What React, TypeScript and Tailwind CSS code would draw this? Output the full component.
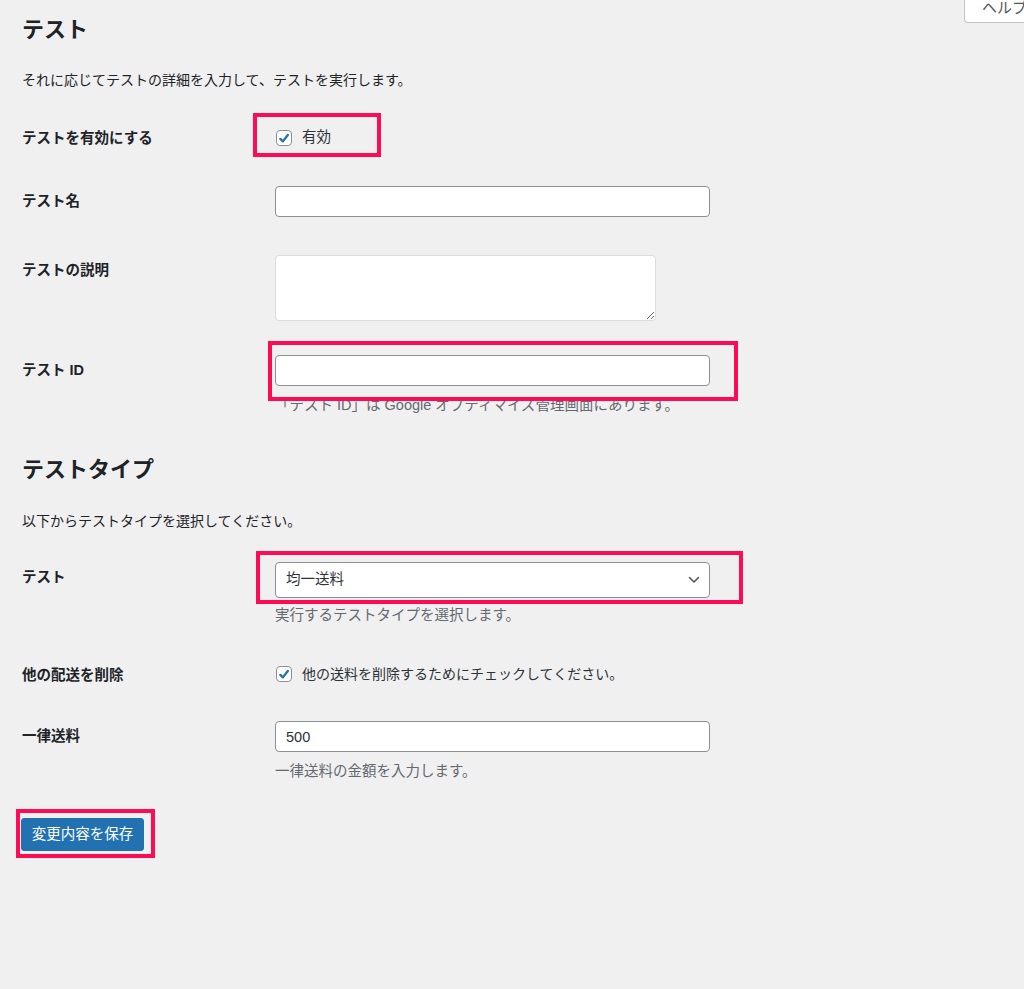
import type { ReactNode } from "react";

const FONT = "font-['Liberation_Sans','Noto_Sans_CJK_JP',sans-serif]";

function Checkbox() {
  return (
    <span className="inline-flex h-[16px] w-[16px] shrink-0 items-center justify-center rounded-[4px] border border-[#8c8f94] bg-white">
      <svg viewBox="0 0 16 16" className="h-[15px] w-[15px]" aria-hidden>
        <path d="M3.8 8.4 L6.7 11.3 L12.4 4" fill="none" stroke="#2271b1" strokeWidth="2.6" strokeLinecap="round" strokeLinejoin="round" />
      </svg>
    </span>
  );
}

function Row({ label, children, fieldClass = "py-[19px]" }: { label: string; children: ReactNode; fieldClass?: string }) {
  return (
    <div className="flex">
      <div className="w-[253px] shrink-0 pt-[25px] text-[14.5px] font-bold leading-[18px] text-[#1d2327]">{label}</div>
      <div className={fieldClass}>{children}</div>
    </div>
  );
}

function Help({ children, className = "mt-[10px]" }: { children: ReactNode; className?: string }) {
  return <p className={`${className} text-[14.5px] leading-[18px] text-[#646970]`}>{children}</p>;
}

const inputCls =
  "block h-[31px] w-[435px] rounded-[4px] border border-[#8c8f94] bg-white px-[10px] text-[14.5px] text-[#2c3338] outline-none";

// red annotation frames drawn over the screenshot
const marks = [
  { id: "enable", cls: "left-[253px] top-[113px] h-[44px] w-[128px]" },
  { id: "testid", cls: "left-[268px] top-[341px] h-[60px] w-[470px]" },
  { id: "type", cls: "left-[256px] top-[551px] h-[53px] w-[487px]" },
  { id: "save", cls: "left-[16px] top-[809px] h-[49px] w-[139px]" },
];

export default function App() {
  return (
    <div className={`relative min-h-screen overflow-hidden bg-[#f0f0f1] pl-[22px] pt-[16px] text-[#1d2327] ${FONT}`}>
      {/* ヘルプ tab */}
      <div className="absolute left-[964px] top-0 h-[23px] w-[110px] rounded-bl-[4px] border-b border-l border-[#c3c4c7] bg-white pl-[17px] text-[15px] leading-[15px] text-[#50575e]">
        ヘルプ
      </div>

      <h2 className="text-[22px] font-bold leading-[28px]">テスト</h2>
      <p className="mt-[27px] text-[14px] leading-[18px]">それに応じてテストの詳細を入力して、テストを実行します。</p>

      <div className="mt-[15px]">
        <Row label="テストを有効にする" fieldClass="pb-[21px] pt-[24px]">
          <label className="flex h-[18px] items-center gap-[10px] pl-[1px] pt-[2px] text-[14.5px] text-[#2c3338]">
            <Checkbox />
            有効
          </label>
        </Row>
        <Row label="テスト名">
          <input className={inputCls} readOnly defaultValue="" />
        </Row>
        <Row label="テストの説明" fieldClass="pb-[15px] pt-[19px]">
          <textarea
            className="block h-[66px] w-[381px] rounded-[4px] border border-[#dcdcde] bg-white outline-none"
            readOnly
            defaultValue=""
          />
        </Row>
        <Row label="テスト ID">
          <input className={inputCls} readOnly defaultValue="" />
          <Help>「テスト ID」は Google オプティマイズ管理画面にあります。</Help>
        </Row>
      </div>

      <h2 className="mt-[23px] text-[22px] font-bold leading-[28px]">テストタイプ</h2>
      <p className="mt-[28px] text-[14px] leading-[18px]">以下からテストタイプを選択してください。</p>

      <div className="mt-[13px]">
        <Row label="テスト" fieldClass="pb-[17px] pt-[19px]">
          <div className="flex h-[36px] w-[435px] items-center justify-between rounded-[4px] border border-[#8c8f94] bg-white pl-[10px] pr-[9px] text-[14.5px] text-[#2c3338]">
            <span>均一送料</span>
            <svg viewBox="0 0 12 8" className="h-[8px] w-[12px]" aria-hidden>
              <path d="M1.5 1.5 L6 6 L10.5 1.5" fill="none" stroke="#50575e" strokeWidth="1.6" strokeLinecap="round" strokeLinejoin="round" />
            </svg>
          </div>
          <Help className="mt-[8px]">実行するテストタイプを選択します。</Help>
        </Row>
        <Row label="他の配送を削除" fieldClass="pb-[19px] pt-[24px]">
          <label className="flex h-[18px] items-center gap-[10px] pl-[1px] text-[14px] text-[#2c3338]">
            <Checkbox />
            他の送料を削除するためにチェックしてください。
          </label>
        </Row>
        <Row label="一律送料">
          <input className={inputCls} readOnly defaultValue="500" />
          <Help>一律送料の金額を入力します。</Help>
        </Row>
      </div>

      <button
        type="button"
        className="-ml-[1px] mt-[19px] h-[33px] w-[123px] rounded-[3px] border border-[#2271b1] bg-[#2271b1] text-[14.5px] text-white"
      >
        変更内容を保存
      </button>

      {marks.map((m) => (
        <div key={m.id} className={`pointer-events-none absolute border-[4px] border-[#ff0a54] ${m.cls}`} />
      ))}
    </div>
  );
}
